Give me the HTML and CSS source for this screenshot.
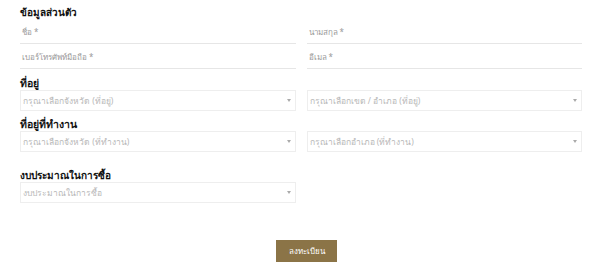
FILE: index.html
```html
<!DOCTYPE html>
<html lang="th">

<head>
    <meta charset="UTF-8">
    <meta name="viewport" content="width=device-width, initial-scale=1.0">
    <title>ลงทะเบียน</title>
    <link rel="stylesheet" href="styles.css">
</head>

<body>
    <form class="register-form" action="#">
        <h3 class="section-title first">ข้อมูลส่วนตัว</h3>
        <div class="grid">
            <div class="field">ชื่อ *</div>
            <div class="field">นามสกุล *</div>
            <div class="field">เบอร์โทรศัพท์มือถือ *</div>
            <div class="field">อีเมล *</div>
        </div>

        <h3 class="section-title">ที่อยู่</h3>
        <div class="grid">
            <div class="select">กรุณาเลือกจังหวัด (ที่อยู่)<span class="arrow"></span></div>
            <div class="select">กรุณาเลือกเขต / อำเภอ (ที่อยู่)<span class="arrow"></span></div>
        </div>

        <h3 class="section-title tight">ที่อยู่ที่ทำงาน</h3>
        <div class="grid">
            <div class="select">กรุณาเลือกจังหวัด (ที่ทำงาน)<span class="arrow"></span></div>
            <div class="select">กรุณาเลือกอำเภอ (ที่ทำงาน)<span class="arrow"></span></div>
        </div>

        <h3 class="section-title wide">งบประมาณในการซื้อ</h3>
        <div class="grid">
            <div class="select">งบประมาณในการซื้อ<span class="arrow"></span></div>
        </div>

        <div class="actions">
            <button type="submit">ลงทะเบียน</button>
        </div>
    </form>
</body>

</html>
```

FILE: styles.css
```css
body {
    margin: 0;
    padding: 0;
    font-family: "Noto Sans", sans-serif;
    background-color: #ffffff;
}

.register-form {
    padding: 0 18px 0 20px;
}

.section-title {
    margin: 0;
    padding-top: 8px;
    font-size: 10.5px;
    line-height: 13px;
    font-weight: bold;
    color: #111111;
}

.section-title.first {
    padding-top: 6px;
    font-size: 10px;
}

.section-title.tight {
    padding-top: 7px;
}

.section-title.wide {
    padding-top: 17px;
    font-size: 10px;
}

.grid {
    display: grid;
    grid-template-columns: 1fr 1fr;
    column-gap: 11px;
}

.field {
    height: 24px;
    line-height: 26px;
    padding-left: 2px;
    font-size: 8px;
    color: #999999;
    border-bottom: 1px solid #e6e6e6;
}

.select {
    position: relative;
    height: 19px;
    line-height: 19px;
    padding-left: 2px;
    font-size: 8.5px;
    color: #b8b8b8;
    border: 1px solid #eeeeee;
}

.arrow {
    position: absolute;
    right: 4px;
    top: 8px;
    border-left: 2px solid transparent;
    border-right: 2px solid transparent;
    border-top: 3px solid #aaaaaa;
}

.actions {
    display: flex;
    justify-content: center;
    padding: 37px 0 0 11px;
}

button[type="submit"] {
    width: 61px;
    height: 22px;
    background-color: #8b7447;
    color: #ffffff;
    font-family: "Noto Sans", sans-serif;
    font-size: 8px;
    border: none;
    padding: 0;
    cursor: pointer;
}
```
